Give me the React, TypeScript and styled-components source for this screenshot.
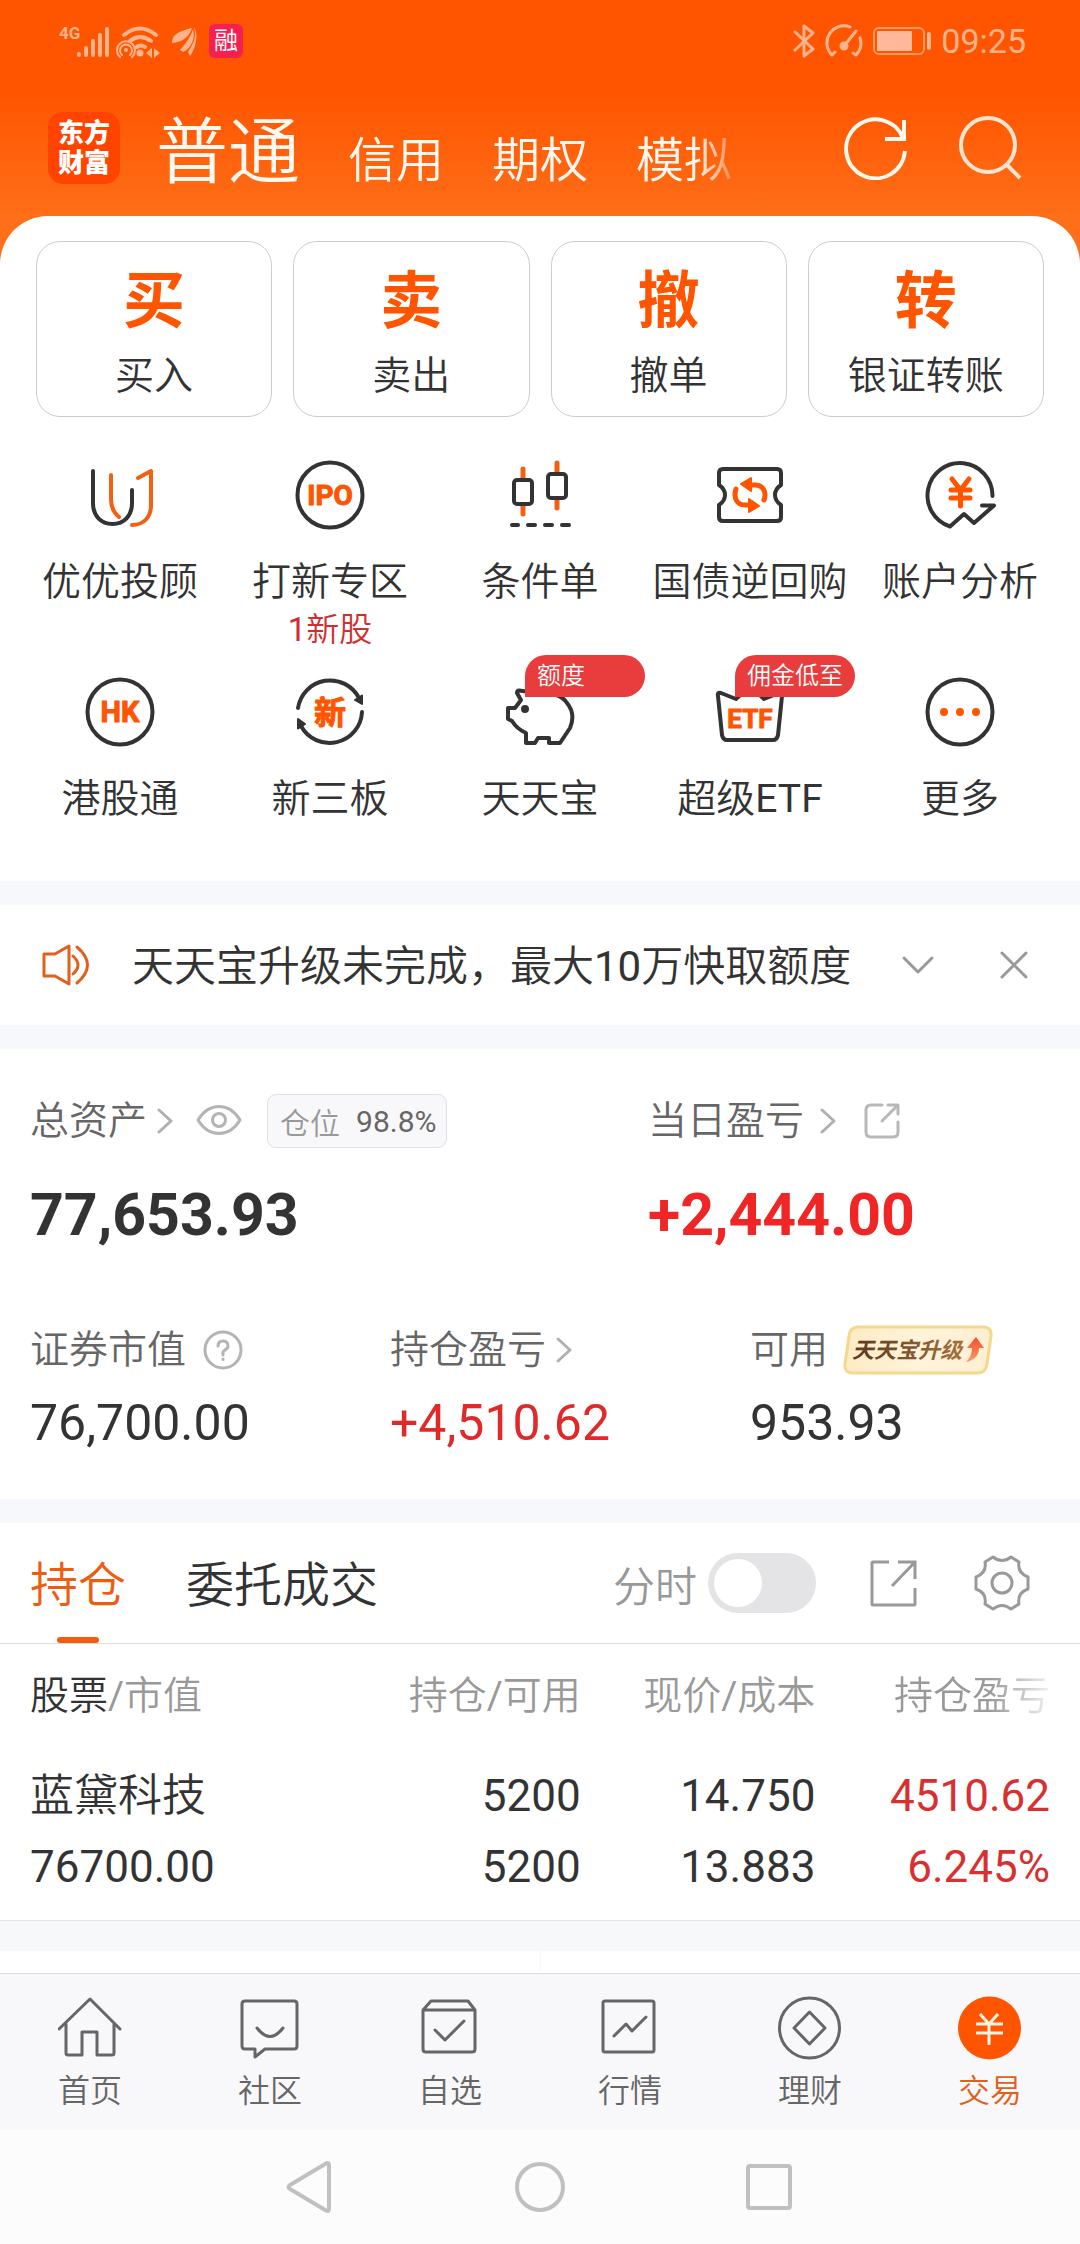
import React from "react";
import styled, { createGlobalStyle } from "styled-components";

const ORANGE = "#ff5500";
const INK = "#333333";
const RED = "#e02a2a";
const THIN = `Roboto, "Noto Sans CJK SC DemiLight", "Noto Sans CJK SC", sans-serif`;

const GlobalStyle = createGlobalStyle`
  * { box-sizing: border-box; }
  html, body { margin: 0; padding: 0; }
  body {
    background: #ffffff;
    color: ${INK};
    font-family: Roboto, "Noto Sans CJK SC", sans-serif;
    font-weight: 400;
    font-size: 39px;
  }
  button {
    margin: 0;
    padding: 0;
    border: 0;
    background: none;
    color: inherit;
    font: inherit;
    cursor: pointer;
  }
  a { color: inherit; text-decoration: none; }
  svg { display: block; flex: none; }
`;

const Page = styled.div`
  display: flex;
  flex-direction: column;
  min-height: 100vh;
`;

/* ---------- Header ---------- */

const Hero = styled.div`
  background: linear-gradient(#ff5500 0, #ff5500 92px, #ff6e18 216px, #ff6e18 100%);
`;

const StatusBar = styled.div`
  display: flex;
  align-items: center;
  justify-content: space-between;
  height: 80px;
  padding: 2px 54px 0 59px;
  color: #ffb48c;
  font-size: 34px;
`;

const StatusGroup = styled.div<{ $gap: number }>`
  display: flex;
  align-items: center;
  gap: ${(p) => p.$gap}px;
`;

const LoanBadge = styled.span`
  display: grid;
  place-items: center;
  width: 34px;
  height: 34px;
  border-radius: 6px;
  background: #f52050;
  color: #ffffff;
  font-size: 24px;
  line-height: 34px;
`;

const TopBar = styled.header`
  display: flex;
  align-items: center;
  height: 136px;
  padding: 0 58px 0 48px;
`;

const Logo = styled.span`
  display: grid;
  place-content: center;
  flex: none;
  width: 72px;
  height: 72px;
  margin-right: 36px;
  border-radius: 15px;
  background: #ff4400;
  color: #ffffff;
  font-size: 26px;
  font-weight: 900;
  line-height: 30px;
  text-align: center;
`;

const AccountTabs = styled.nav`
  display: flex;
  flex: 1;
  align-items: baseline;
  gap: 48px;
  min-width: 0;
  padding-top: 6px;
  white-space: nowrap;
  mask-image: linear-gradient(90deg, #000 0, #000 540px, transparent 590px);
`;

const AccountTab = styled.button<{ $active?: boolean }>`
  color: #fff8f0;
  font-family: "Noto Sans CJK SC DemiLight", "Noto Sans CJK SC", sans-serif;
  font-size: ${(p) => (p.$active ? 72 : 48)}px;
  line-height: 108px;
`;

const TopActions = styled.div`
  display: flex;
  gap: 50px;
`;

/* ---------- Trade panel ---------- */

const Panel = styled.section`
  padding: 25px 0 57px;
  border-radius: 48px 48px 0 0;
  background: #ffffff;
`;

const TradeRow = styled.div`
  display: grid;
  grid-template-columns: repeat(4, 1fr);
  gap: 21px;
  padding: 0 36px;
`;

const TradeCard = styled.button`
  display: flex;
  flex-direction: column;
  align-items: center;
  gap: 17px;
  padding: 28px 0 15px;
  border: 1px solid #cccccc;
  border-radius: 24px;
`;

const TradeMark = styled.span`
  color: ${ORANGE};
  font-size: 62px;
  font-weight: 700;
  line-height: 64px;
`;

const Label = styled.span<{ $tone?: string }>`
  color: ${(p) => p.$tone || INK};
  font-family: ${THIN};
  font-size: 39px;
  line-height: 50px;
  white-space: nowrap;
`;

const ServiceGrid = styled.div`
  display: grid;
  grid-template-columns: repeat(5, 1fr);
  row-gap: 19px;
  margin-top: 38px;
  padding: 0 15px;
`;

const Service = styled.button`
  display: flex;
  flex-direction: column;
  align-items: center;
  justify-content: flex-start;
`;

const ServiceIcon = styled.span`
  position: relative;
  width: 80px;
  height: 80px;
  margin-bottom: 22px;
`;

const ServiceHint = styled.span`
  color: #d02f2f;
  font-family: ${THIN};
  font-size: 33px;
  line-height: 46px;
`;

const Tag = styled.span`
  position: absolute;
  top: -17px;
  left: 25px;
  width: 120px;
  height: 42px;
  padding-left: 12px;
  border-radius: 21px 21px 21px 0;
  background: #e93c3c;
  color: #ffffff;
  font-family: ${THIN};
  font-size: 24px;
  line-height: 43px;
  text-align: left;
  white-space: nowrap;
`;

const IconText = styled.text`
  fill: ${ORANGE};
  stroke: ${ORANGE};
  stroke-width: 1;
  font-weight: 700;
  text-anchor: middle;
`;

const Gap = styled.div`
  height: 24px;
  background: #f7f8fb;
`;

/* ---------- Notice ---------- */

const Notice = styled.section`
  display: flex;
  align-items: center;
  height: 120px;
  padding: 0 50px 0 42px;
`;

const NoticeText = styled.a`
  flex: 1;
  padding: 4px 0 0 42px;
  font-family: ${THIN};
  font-size: 42px;
  line-height: 60px;
  white-space: nowrap;
`;

const NoticeActions = styled.div`
  display: flex;
  align-items: center;
  gap: 62px;
`;

/* ---------- Assets ---------- */

const Assets = styled.section`
  padding: 45px 0 46px;
`;

const TotalRow = styled.div`
  display: grid;
  grid-template-columns: 3fr 2fr;
`;

const DetailRow = styled.div`
  display: grid;
  grid-template-columns: repeat(3, 1fr);
  margin-top: 75px;
`;

const Figure = styled.div<{ $inset?: boolean }>`
  padding-left: ${(p) => (p.$inset ? 30 : 0)}px;
`;

const FigureHead = styled.div<{ $height: number; $gap: number }>`
  display: flex;
  align-items: center;
  gap: ${(p) => p.$gap}px;
  height: ${(p) => p.$height}px;
`;

const LabelLink = styled.button<{ $gap: number }>`
  display: flex;
  align-items: center;
  gap: ${(p) => p.$gap}px;
`;

const Position = styled.span`
  display: flex;
  align-items: center;
  gap: 16px;
  height: 54px;
  padding: 0 10px 0 12px;
  border: 1px solid #e0e0e4;
  border-radius: 9px;
  background: #f8f8fb;
  color: #666666;
  font-family: ${THIN};
  font-size: 30px;
`;

const PositionLabel = styled.span`
  color: #999999;
`;

const Total = styled.div<{ $tone?: string }>`
  margin-top: 31px;
  color: ${(p) => p.$tone || INK};
  font-size: 59px;
  font-weight: 700;
  line-height: 72px;
`;

const Amount = styled.div<{ $tone?: string }>`
  margin-top: 19px;
  color: ${(p) => p.$tone || INK};
  font-size: 50px;
  line-height: 60px;
`;

const Upgrade = styled.button`
  display: block;
`;

const UpgradeText = styled.text`
  font-size: 22px;
  font-weight: 700;
  font-style: italic;
`;

/* ---------- Holdings ---------- */

const HoldingsBar = styled.div`
  display: flex;
  align-items: stretch;
  height: 121px;
  padding: 0 50px 0 30px;
  border-bottom: 1px solid #dddddd;
`;

const HoldingsTabs = styled.div`
  display: flex;
  flex: 1;
  gap: 60px;
`;

const HoldingsTab = styled.button<{ $active?: boolean }>`
  position: relative;
  padding-top: 6px;
  color: ${(p) => (p.$active ? "#ee5c10" : INK)};
  font-family: ${THIN};
  font-size: 48px;
  line-height: 60px;
  &::after {
    content: "";
    display: ${(p) => (p.$active ? "block" : "none")};
    position: absolute;
    bottom: 0;
    left: 50%;
    width: 42px;
    height: 6px;
    margin-left: -21px;
    border-radius: 3px;
    background: #f25c10;
  }
`;

const HoldingsTools = styled.div`
  display: flex;
  align-items: center;
`;

const SwitchLabel = styled.label`
  display: flex;
  align-items: center;
  gap: 11px;
  margin-right: 53px;
  color: #999999;
  font-family: ${THIN};
  font-size: 42px;
`;

const Switch = styled.input`
  appearance: none;
  width: 108px;
  height: 60px;
  margin: 0;
  padding: 6px;
  border-radius: 30px;
  background: #e4e4e6;
  &::before {
    content: "";
    display: block;
    width: 48px;
    height: 48px;
    border-radius: 50%;
    background: #ffffff;
  }
  &:checked { background: ${ORANGE}; }
  &:checked::before { margin-left: 48px; }
`;

const ToolButton = styled.button`
  & + & { margin-left: 57px; }
`;

const TableWrap = styled.div`
  padding: 0 30px;
  border-bottom: 1px solid #e8e8ea;
`;

const Table = styled.table`
  width: 100%;
  border-collapse: collapse;
  table-layout: fixed;
`;

const HeadCell = styled.th<{ $first?: boolean; $fade?: boolean }>`
  width: ${(p) => (p.$first ? 31 : 23)}%;
  height: 98px;
  padding: 0 0 2px;
  color: #999999;
  font-family: ${THIN};
  font-size: 39px;
  font-weight: 400;
  text-align: ${(p) => (p.$first ? "left" : "right")};
  white-space: nowrap;
  mask-image: ${(p) =>
    p.$fade ? "linear-gradient(270deg, rgba(0,0,0,0.15) 0, #000 60px)" : "none"};
`;

const Strong = styled.span`
  color: ${INK};
`;

const Cell = styled.td<{ $tone?: string; $first?: boolean }>`
  padding: 19px 0 17px;
  color: ${(p) => p.$tone || INK};
  font-family: ${THIN};
  font-size: 44px;
  line-height: 71px;
  text-align: ${(p) => (p.$first ? "left" : "right")};
`;

const GapTall = styled.div`
  height: 30px;
  background: #f7f8fa;
`;

const NextStrip = styled.div`
  display: grid;
  grid-template-columns: 1fr 1fr;
  flex: 1;
  min-height: 22px;
`;

const NextCell = styled.div`
  & + & { border-left: 1px solid #f8f8fa; }
`;

/* ---------- Bottom ---------- */

const BottomTabs = styled.nav`
  display: grid;
  grid-template-columns: repeat(6, 1fr);
  padding: 22px 0 19px;
  border-top: 1px solid #dddddd;
  background: #f8f8fa;
`;

const BottomTab = styled.a<{ $active?: boolean }>`
  display: flex;
  flex-direction: column;
  align-items: center;
  gap: 11px;
  color: ${(p) => (p.$active ? "#e0601c" : "#666666")};
  font-family: ${THIN};
  font-size: 32px;
  line-height: 40px;
`;

const SystemNav = styled.div`
  display: flex;
  align-items: center;
  justify-content: center;
  gap: 176px;
  height: 114px;
  background: #fcfcfc;
`;

/* ---------- Icons ---------- */

const strokeRound = {
  fill: "none",
  strokeLinecap: "round",
  strokeLinejoin: "round",
} as const;

const Box80 = ({ children }: { children: React.ReactNode }) => (
  <svg width="80" height="80" viewBox="0 0 80 80" {...strokeRound} stroke={INK} strokeWidth="4">
    {children}
  </svg>
);

const AdvisorIcon = () => (
  <Box80>
    <path d="M13 16V48C13 61 21 69 32.500 69S52 61 52 48V35" />
    <path stroke="#f26014" d="M31 20V44C31 52 34 58 39 62M58 23L71 16V50C71 62 64 70 52 70" />
  </Box80>
);

const IpoIcon = () => (
  <Box80>
    <circle cx="40" cy="40" r="32.500" />
    <IconText x="40" y="50" fontSize="28">IPO</IconText>
  </Box80>
);

const CandleIcon = () => (
  <Box80>
    <path stroke="#f26014" strokeWidth="5" d="M23 14V24M23 50V59M57 8V18M57 44V53" />
    <rect x="14" y="25" width="18" height="24" rx="3" />
    <rect x="48" y="19" width="18" height="24" rx="3" />
    <path d="M12 70H18M28 70H35M45 70H52M62 70H69" />
  </Box80>
);

const RepoIcon = () => (
  <Box80>
    <path d="M13 14H67Q71 14 71 18V30Q65 34 65 40T71 50V62Q71 66 67 66H13Q9 66 9 62V50Q15 46 15 40T9 30V18Q9 14 13 14Z" />
    <path stroke={ORANGE} strokeWidth="5" d="M40 30H45C53 30 57 37 54 45M26 34C23 43 27 50 35 50H40" />
    <path fill={ORANGE} stroke={ORANGE} strokeWidth="2" d="M31 29L41 23V36ZM49 51L39 44V57Z" />
  </Box80>
);

const AnalysisIcon = () => (
  <Box80>
    <path d="M72.500 41A32.500 32.500 0 1 0 30 71.500L44 59L54 68L74 50.500H62" />
    <path stroke={ORANGE} strokeWidth="5" d="M32 24L40.500 35L49 24M40.500 35V51M31 35H50M31 43H50" />
  </Box80>
);

const HkIcon = () => (
  <Box80>
    <circle cx="40" cy="40" r="32.500" />
    <IconText x="40" y="50" fontSize="29">HK</IconText>
  </Box80>
);

const NeeqIcon = () => (
  <Box80>
    <path d="M8 36A32.500 32.500 0 0 1 69 26M72 40A32.500 32.500 0 0 1 11 54" />
    <path fill={INK} strokeWidth="2" d="M65 28L72 23.500V32ZM15 52L8 56.500V47Z" />
    <IconText x="40" y="52" fontSize="32">新</IconText>
  </Box80>
);

const PigIcon = () => (
  <Box80>
    <path d="M30 20L19 18.500Q17 18.500 17 21L21 28L15 36H8V47L12 49Q17 57 26 61V71H35L38 66H49V71H60L70 56Q76 42 67 31Q63 25 56 23Z" />
    <circle cx="25" cy="37" r="2" fill={INK} />
  </Box80>
);

const EtfIcon = () => (
  <Box80>
    <path d="M11 21L26 27L40 14L54 27L69 21Q73 20 72 24L68 63Q67 68 63 68H17Q13 68 12 63L8 24Q7 20 11 21Z" />
    <IconText x="40" y="56" fontSize="26">ETF</IconText>
  </Box80>
);

const MoreIcon = () => (
  <Box80>
    <circle cx="40" cy="40" r="32.500" />
    <g fill={ORANGE} stroke="none">
      <circle cx="24" cy="40" r="4" />
      <circle cx="40" cy="40" r="4" />
      <circle cx="56" cy="40" r="4" />
    </g>
  </Box80>
);

const Chevron = () => (
  <svg width="16" height="26" viewBox="0 0 16 26" {...strokeRound} stroke="#b0b0b0" strokeWidth="3">
    <path d="M2 2L14 13L2 24" />
  </svg>
);

const EyeIcon = () => (
  <svg width="48" height="34" viewBox="0 0 48 34" {...strokeRound} stroke="#b4b4b4" strokeWidth="3">
    <path d="M2 16C13 -2 33 -2 44 16C33 34 13 34 2 16Z" />
    <circle cx="23" cy="16" r="6.500" />
  </svg>
);

const ShareSmall = () => (
  <svg width="36" height="36" viewBox="0 0 36 36" {...strokeRound} stroke="#b8b8b8" strokeWidth="3">
    <path d="M18 2H7Q2 2 2 7V29Q2 34 7 34H29Q34 34 34 29V19M24 2H34V11M33 3L18 18" />
  </svg>
);

const ShareLarge = () => (
  <svg width="48" height="48" viewBox="0 0 48 48" fill="none" stroke="#999999" strokeWidth="3">
    <path d="M20 3H4Q3 3 3 4V45Q3 46 4 46H45Q46 46 46 45V29M29 3H46V20M45 4L23 27" />
  </svg>
);

const GearIcon = () => (
  <svg width="56" height="56" viewBox="0 0 56 56" {...strokeRound} stroke="#999999" strokeWidth="3">
    <path d="M19 2Q28 9 37 2L45 7Q43 18 54 22V34Q43 38 45 49L37 54Q28 47 19 54L11 49Q13 38 2 34V22Q13 18 11 7Z" />
    <circle cx="28" cy="28" r="10" />
  </svg>
);

const HelpIcon = () => (
  <svg width="40" height="40" viewBox="0 0 40 40" {...strokeRound} stroke="#b4b4b4" strokeWidth="3">
    <circle cx="20" cy="20" r="18" />
    <path d="M15 16Q15 11 20 11T25 16Q25 18 22 20T20 25M20 29V29.500" />
  </svg>
);

const SignalIcons = () => (
  <svg width="138" height="36" viewBox="0 0 138 36" fill="none" stroke="#ffb48c" strokeWidth="4" strokeLinecap="round">
    <text x="0" y="16" fontSize="17" fontWeight="700" fill="#ffb48c" stroke="none">4G</text>
    <path d="M20 31V32M27 25V32M34 18V32M41 12V32M48 6V32" />
    <path d="M65 12Q81 -1 97 12M71 18Q81 10 92 18M78 24Q81 21 86 24" />
    <circle cx="67" cy="27" r="2" fill="#ffb48c" stroke="none" />
    <path strokeWidth="2" d="M63 32A6 6 0 1 1 71 32M61 34A9 9 0 1 1 73 34" />
    <circle cx="81" cy="30" r="3.500" fill="#ffb48c" stroke="none" />
    <path fill="#ffb48c" stroke="none" d="M87 30L93 25V35ZM101 30L95 25V35Z" />
    <g fill="#ffb48c" stroke="none">
      <path d="M113 20C113 10 122 8 133 5C130 14 124 19 113 20Z" />
      <path d="M121 27C127 20 132 14 134 5C137 18 131 26 124 29Z" />
      <path d="M129 29C134 22 136 14 135 5C139 9 138 24 131 33Z" />
    </g>
    <path stroke="#ff5500" strokeWidth="1" d="M134 5C131 14 126 19 119 23M135 6C137 16 133 23 127 29" />
  </svg>
);

const BluetoothIcon = () => (
  <svg width="22" height="34" viewBox="0 0 22 34" fill="none" stroke="#ffb48c" strokeWidth="3" strokeLinejoin="round">
    <path d="M1 7L20 25L11 32V2L20 9L1 27" />
  </svg>
);

const GaugeIcon = () => (
  <svg width="38" height="34" viewBox="0 0 38 34" fill="none" stroke="#ffb48c" strokeWidth="3" strokeLinecap="round">
    <path d="M7 31A17 17 0 0 1 25 3M35 14A17 17 0 0 1 31 31M7 31L10 28M31 31L28 29" />
    <circle cx="19" cy="22" r="3" fill="#ffb48c" />
    <path d="M19 22L31 7" />
  </svg>
);

const BatteryIcon = () => (
  <svg width="58" height="28" viewBox="0 0 58 28" fill="none">
    <rect x="1" y="1" width="50" height="26" rx="5" stroke="#ff9a66" strokeWidth="2" />
    <rect x="4" y="4" width="35" height="20" rx="1" fill="#ffb899" />
    <rect x="54" y="5" width="4" height="18" rx="2" fill="#ffb48c" />
  </svg>
);

const RefreshIcon = () => (
  <svg width="64" height="64" viewBox="0 0 64 64" fill="none" stroke="#fff8ee" strokeWidth="4">
    <path d="M61 35A29.500 29.500 0 1 1 59 22M60 4V23H41" />
  </svg>
);

const SearchIcon = () => (
  <svg width="64" height="64" viewBox="0 0 64 64" fill="none" stroke="#ffe4cf" strokeWidth="4">
    <circle cx="30" cy="29" r="27" />
    <path d="M48 48L62 62" />
  </svg>
);

const SpeakerIcon = () => (
  <svg width="48" height="44" viewBox="0 0 48 44" {...strokeRound} stroke="#e0601c" strokeWidth="3">
    <path d="M2 11H13L27 3V41L13 33H2ZM31 13Q41 22 31 31M35 4Q56 22 35 40" />
  </svg>
);

const DownIcon = () => (
  <svg width="36" height="36" viewBox="0 0 36 36" {...strokeRound} stroke="#999999" strokeWidth="3">
    <path d="M4 11L18 25L32 11" />
  </svg>
);

const CloseIcon = () => (
  <svg width="32" height="32" viewBox="0 0 32 32" {...strokeRound} stroke="#999999" strokeWidth="3">
    <path d="M4 4L28 28M28 4L4 28" />
  </svg>
);

const UpgradeBadge = () => (
  <svg width="150" height="50" viewBox="0 0 150 50" role="img" aria-label="天天宝升级">
    <defs>
      <linearGradient id="badgeFill" x1="0" x2="1">
        <stop offset="0" stopColor="#fdebc4" />
        <stop offset="0.5" stopColor="#fff3da" />
        <stop offset="1" stopColor="#fdefd2" />
      </linearGradient>
      <linearGradient id="badgeText" x1="0" x2="1">
        <stop offset="0" stopColor="#5a3820" />
        <stop offset="1" stopColor="#a5713c" />
      </linearGradient>
      <linearGradient id="badgeArrow" x1="0" x2="0" y1="0" y2="1">
        <stop offset="0" stopColor="#fa4a2c" />
        <stop offset="1" stopColor="#f5a068" />
      </linearGradient>
    </defs>
    <path
      d="M15 2H140Q149 2 148 11L144 39Q143 48 134 48H10Q1 48 2 39L6 11Q7 2 15 2Z"
      fill="url(#badgeFill)"
      stroke="#f4d88c"
      strokeWidth="3"
    />
    <UpgradeText x="9" y="33" fill="url(#badgeText)">天天宝升级</UpgradeText>
    <path fill="url(#badgeArrow)" d="M133 12L141 23H136Q136 34 123 37Q129 31 129 23H124Z" />
  </svg>
);

const Box64 = ({ children }: { children: React.ReactNode }) => (
  <svg width="64" height="64" viewBox="0 0 64 64" {...strokeRound} stroke="#666666" strokeWidth="3">
    {children}
  </svg>
);

const HomeIcon = () => (
  <Box64>
    <path d="M1 33L32 3L62 33M8 28V57Q8 59 10 59H24V36H39V59H54Q56 59 56 57V28" />
  </Box64>
);

const CommunityIcon = () => (
  <Box64>
    <path d="M7 5H56Q59 5 59 8V50Q59 53 56 53H27L17 61V53H7Q4 53 4 50V8Q4 5 7 5ZM19 32Q32 49 45 32" />
  </Box64>
);

const WatchIcon = () => (
  <Box64>
    <path d="M5 14L13 5H50L57 14V53Q57 56 54 56H8Q5 56 5 53ZM5 14H57M17 34L27 44L46 25" />
  </Box64>
);

const QuoteIcon = () => (
  <Box64>
    <rect x="5" y="5" width="51" height="51" rx="2" />
    <path d="M16 40L28 28L34 35L48 21" />
  </Box64>
);

const WealthIcon = () => (
  <Box64>
    <circle cx="31.500" cy="32" r="30" />
    <path d="M31.500 16L47 32L31.500 48L16 32Z" />
  </Box64>
);

const TradeIcon = () => (
  <Box64>
    <circle cx="31.500" cy="32" r="31.500" fill={ORANGE} stroke="none" />
    <path stroke="#fff3e4" strokeLinecap="butt" d="M22 18L31 28L40 18M31 28V49M18 28H45M18 37H45" />
  </Box64>
);

/* ---------- Data ---------- */

const trades = [
  { mark: "买", label: "买入" },
  { mark: "卖", label: "卖出" },
  { mark: "撤", label: "撤单" },
  { mark: "转", label: "银证转账" },
];

const services: { label: string; icon: React.ReactNode; hint?: string; tag?: string }[] = [
  { label: "优优投顾", icon: <AdvisorIcon /> },
  { label: "打新专区", icon: <IpoIcon />, hint: "1新股" },
  { label: "条件单", icon: <CandleIcon /> },
  { label: "国债逆回购", icon: <RepoIcon /> },
  { label: "账户分析", icon: <AnalysisIcon /> },
  { label: "港股通", icon: <HkIcon /> },
  { label: "新三板", icon: <NeeqIcon /> },
  { label: "天天宝", icon: <PigIcon />, tag: "额度" },
  { label: "超级ETF", icon: <EtfIcon />, tag: "佣金低至" },
  { label: "更多", icon: <MoreIcon /> },
];

const bottomTabs = [
  { label: "首页", icon: <HomeIcon /> },
  { label: "社区", icon: <CommunityIcon /> },
  { label: "自选", icon: <WatchIcon /> },
  { label: "行情", icon: <QuoteIcon /> },
  { label: "理财", icon: <WealthIcon /> },
  { label: "交易", icon: <TradeIcon />, active: true },
];

export default function App() {
  return (
    <>
      <GlobalStyle />
      <Page>
        <Hero>
          <StatusBar>
            <StatusGroup $gap={12}>
              <SignalIcons />
              <LoanBadge>融</LoanBadge>
            </StatusGroup>
            <StatusGroup $gap={10}>
              <BluetoothIcon />
              <GaugeIcon />
              <BatteryIcon />
              <span>09:25</span>
            </StatusGroup>
          </StatusBar>
          <TopBar>
            <Logo>
              东方
              <br />
              财富
            </Logo>
            <AccountTabs>
              <AccountTab $active>普通</AccountTab>
              <AccountTab>信用</AccountTab>
              <AccountTab>期权</AccountTab>
              <AccountTab>模拟</AccountTab>
            </AccountTabs>
            <TopActions>
              <button aria-label="刷新"><RefreshIcon /></button>
              <button aria-label="搜索"><SearchIcon /></button>
            </TopActions>
          </TopBar>
          <Panel>
            <TradeRow>
              {trades.map((t) => (
                <TradeCard key={t.label}>
                  <TradeMark>{t.mark}</TradeMark>
                  <Label>{t.label}</Label>
                </TradeCard>
              ))}
            </TradeRow>
            <ServiceGrid>
              {services.map((s) => (
                <Service key={s.label}>
                  <ServiceIcon>
                    {s.icon}
                    {s.tag && <Tag>{s.tag}</Tag>}
                  </ServiceIcon>
                  <Label>{s.label}</Label>
                  {s.hint && <ServiceHint>{s.hint}</ServiceHint>}
                </Service>
              ))}
            </ServiceGrid>
          </Panel>
        </Hero>
        <Gap />
        <Notice>
          <SpeakerIcon />
          <NoticeText href="#notice">天天宝升级未完成，最大10万快取额度</NoticeText>
          <NoticeActions>
            <button aria-label="展开"><DownIcon /></button>
            <button aria-label="关闭"><CloseIcon /></button>
          </NoticeActions>
        </Notice>
        <Gap />
        <Assets>
          <TotalRow>
            <Figure $inset>
              <FigureHead $height={54} $gap={23}>
                <LabelLink $gap={10}>
                  <Label $tone="#666666">总资产</Label>
                  <Chevron />
                </LabelLink>
                <button aria-label="隐藏金额"><EyeIcon /></button>
                <Position>
                  <PositionLabel>仓位</PositionLabel>
                  98.8%
                </Position>
              </FigureHead>
              <Total>77,653.93</Total>
            </Figure>
            <Figure>
              <FigureHead $height={54} $gap={28}>
                <LabelLink $gap={16}>
                  <Label $tone="#666666">当日盈亏</Label>
                  <Chevron />
                </LabelLink>
                <button aria-label="分享盈亏"><ShareSmall /></button>
              </FigureHead>
              <Total $tone="#f02525">+2,444.00</Total>
            </Figure>
          </TotalRow>
          <DetailRow>
            <Figure $inset>
              <FigureHead $height={48} $gap={17}>
                <Label $tone="#666666">证券市值</Label>
                <button aria-label="说明"><HelpIcon /></button>
              </FigureHead>
              <Amount>76,700.00</Amount>
            </Figure>
            <Figure $inset>
              <FigureHead $height={48} $gap={17}>
                <LabelLink $gap={10}>
                  <Label $tone="#666666">持仓盈亏</Label>
                  <Chevron />
                </LabelLink>
              </FigureHead>
              <Amount $tone={RED}>+4,510.62</Amount>
            </Figure>
            <Figure $inset>
              <FigureHead $height={48} $gap={15}>
                <Label $tone="#666666">可用</Label>
                <Upgrade><UpgradeBadge /></Upgrade>
              </FigureHead>
              <Amount>953.93</Amount>
            </Figure>
          </DetailRow>
        </Assets>
        <Gap />
        <HoldingsBar>
          <HoldingsTabs>
            <HoldingsTab $active>持仓</HoldingsTab>
            <HoldingsTab>委托成交</HoldingsTab>
          </HoldingsTabs>
          <HoldingsTools>
            <SwitchLabel>
              分时
              <Switch type="checkbox" role="switch" />
            </SwitchLabel>
            <ToolButton aria-label="分享持仓"><ShareLarge /></ToolButton>
            <ToolButton aria-label="设置"><GearIcon /></ToolButton>
          </HoldingsTools>
        </HoldingsBar>
        <TableWrap>
          <Table>
            <thead>
              <tr>
                <HeadCell $first><Strong>股票</Strong>/市值</HeadCell>
                <HeadCell>持仓/可用</HeadCell>
                <HeadCell>现价/成本</HeadCell>
                <HeadCell $fade>持仓盈亏</HeadCell>
              </tr>
            </thead>
            <tbody>
              <tr>
                <Cell $first>
                  <div>蓝黛科技</div>
                  <div>76700.00</div>
                </Cell>
                <Cell>
                  <div>5200</div>
                  <div>5200</div>
                </Cell>
                <Cell>
                  <div>14.750</div>
                  <div>13.883</div>
                </Cell>
                <Cell $tone="#d83030">
                  <div>4510.62</div>
                  <div>6.245%</div>
                </Cell>
              </tr>
            </tbody>
          </Table>
        </TableWrap>
        <GapTall />
        <NextStrip>
          <NextCell />
          <NextCell />
        </NextStrip>
        <BottomTabs>
          {bottomTabs.map((t) => (
            <BottomTab key={t.label} href={`#${t.label}`} $active={t.active}>
              {t.icon}
              {t.label}
            </BottomTab>
          ))}
        </BottomTabs>
        <SystemNav>
          <button aria-label="返回">
            <svg width="54" height="54" viewBox="0 0 54 54" {...strokeRound} stroke="#c0c0c0" strokeWidth="4">
              <path d="M43 3.500Q46 2 46 5V49Q46 52 43 50.500L7 29Q4 27 7 25Z" />
            </svg>
          </button>
          <button aria-label="主屏幕">
            <svg width="54" height="54" viewBox="0 0 54 54" {...strokeRound} stroke="#c0c0c0" strokeWidth="4">
              <circle cx="27" cy="27" r="23" />
            </svg>
          </button>
          <button aria-label="最近任务">
            <svg width="54" height="54" viewBox="0 0 54 54" {...strokeRound} stroke="#c0c0c0" strokeWidth="4">
              <rect x="5" y="6" width="42" height="42" rx="2" />
            </svg>
          </button>
        </SystemNav>
      </Page>
    </>
  );
}
